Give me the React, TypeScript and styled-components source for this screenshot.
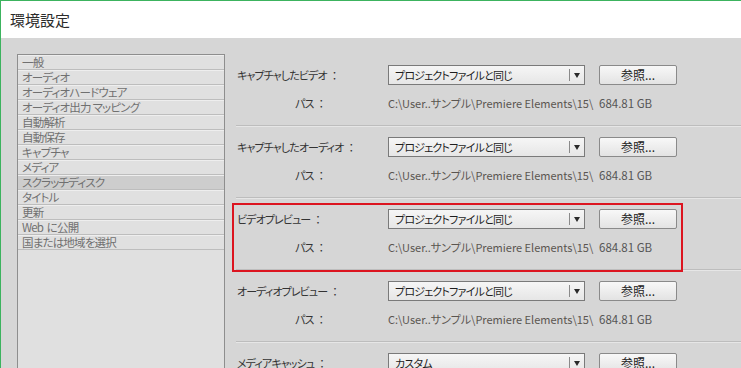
import React from 'react';
import styled, { createGlobalStyle } from 'styled-components';

const GlobalStyle = createGlobalStyle`
  html, body {
    margin: 0;
    padding: 0;
    background: #ffffff;
  }
  body {
    font-family: "Noto Sans CJK JP", "Liberation Sans", sans-serif;
    font-feature-settings: "palt";
  }
`;

const categories = [
  '一般',
  'オーディオ',
  'オーディオハードウェア',
  'オーディオ出力 マッピング',
  '自動解析',
  '自動保存',
  'キャプチャ',
  'メディア',
  'スクラッチディスク',
  'タイトル',
  '更新',
  'Web\u00a0 に公開',
  '国または地域を選択',
];

const disks = [
  { label: 'キャプチャしたビデオ', value: 'プロジェクトファイルと同じ' },
  { label: 'キャプチャしたオーディオ', value: 'プロジェクトファイルと同じ' },
  { label: 'ビデオプレビュー', value: 'プロジェクトファイルと同じ', marked: true },
  { label: 'オーディオプレビュー', value: 'プロジェクトファイルと同じ' },
  { label: 'メディアキャッシュ', value: 'カスタム' },
];

export default function App() {
  return (
    <>
      <GlobalStyle />
      <Window>
        <TitleBar>環境設定</TitleBar>
        <Body>
          <Sidebar>
            {categories.map((c) => (
              <Category key={c} $selected={c === 'スクラッチディスク'}>
                {c}
              </Category>
            ))}
          </Sidebar>
          <Content>
            {disks.map((d) => (
              <Section key={d.label}>
                <Row>
                  <Label>
                    {d.label}
                    <Colon>：</Colon>
                  </Label>
                  <Select>
                    <SelectText>{d.value}</SelectText>
                    <SelectArrow>
                      <Triangle />
                    </SelectArrow>
                  </Select>
                  <span />
                  <Button>参照...</Button>
                </Row>
                <PathRow>
                  <PathLabel>
                    パス<Colon>：</Colon>
                  </PathLabel>
                  <PathText>C:\User..サンプル\Premiere Elements\15\</PathText>
                  <span />
                  <Size>684.81 GB</Size>
                </PathRow>
                {d.marked && <Highlight />}
              </Section>
            ))}
          </Content>
        </Body>
      </Window>
    </>
  );
}

const Window = styled.div`
  display: flex;
  flex-direction: column;
  height: 100vh;
  box-sizing: border-box;
  border-top: 1px solid #3cb35e;
  border-left: 1px solid #3cb35e;
  overflow: hidden;
`;

const TitleBar = styled.div`
  height: 37px;
  flex-shrink: 0;
  display: flex;
  align-items: center;
  padding-left: 9px;
  background: #ffffff;
  color: #2b2b2b;
  font-size: 15px;
`;

const Body = styled.div`
  flex: 1;
  display: flex;
  gap: 8px;
  padding: 16px 0 0 16px;
  background: #d6d6d6;
  min-height: 0;
`;

const Sidebar = styled.div`
  width: 206px;
  flex-shrink: 0;
  background: #e0e0e0;
  border: 1px solid #8e8e8e;
  border-bottom: none;
`;

const Category = styled.div<{ $selected?: boolean }>`
  height: 13px;
  line-height: 13px;
  padding-left: 4px;
  font-size: 11.5px;
  letter-spacing: -0.8px;
  color: #707070;
  white-space: nowrap;
  background: ${(p) => (p.$selected ? '#cdcdcd' : '#e0e0e0')};
  border-top: 1px solid #eeeeee;
  border-bottom: 1px solid #bdbdbd;
`;

const Content = styled.div`
  flex: 1;
  padding-left: 3px;
`;

const Section = styled.div`
  position: relative;
  padding: 11px 0 14px 1px;
  border-bottom: 1px solid #bdbdbd;
  box-shadow: 0 1px 0 #e6e6e6;
`;

const Row = styled.div`
  display: grid;
  grid-template-columns: 151px 197px 14px 78px;
  height: 20px;
  align-items: center;
`;

const PathRow = styled(Row)`
  height: 16px;
  margin-top: 10px;
`;

const Label = styled.div`
  font-size: 11px;
  letter-spacing: -0.9px;
  color: #333333;
  white-space: nowrap;
`;

const Colon = styled.span`
  margin-left: 5px;
  letter-spacing: 0;
`;

const PathLabel = styled(Label)`
  padding-left: 58px;
`;

const Select = styled.div`
  display: flex;
  height: 20px;
  box-sizing: border-box;
  border: 1px solid #7a7a7a;
  background: linear-gradient(#f6f6f6, #e6e6e6);
`;

const SelectText = styled.div`
  flex: 1;
  padding-left: 6px;
  font-size: 11px;
  letter-spacing: -0.8px;
  line-height: 18px;
  color: #1e1e1e;
  white-space: nowrap;
`;

const SelectArrow = styled.div`
  width: 15px;
  display: flex;
  align-items: center;
  justify-content: center;
  position: relative;
  &::before {
    content: '';
    position: absolute;
    left: 0;
    top: 3px;
    bottom: 3px;
    border-left: 1px solid #8a8a8a;
  }
`;

const Triangle = styled.div`
  width: 0;
  height: 0;
  margin-left: 1px;
  border-left: 3.5px solid transparent;
  border-right: 3.5px solid transparent;
  border-top: 5px solid #2a2a2a;
`;

const Button = styled.div`
  height: 20px;
  box-sizing: border-box;
  border: 1px solid #8a8a8a;
  border-radius: 2px;
  background: linear-gradient(#f8f8f8, #e3e3e3);
  font-size: 12px;
  line-height: 18px;
  text-align: center;
  color: #222222;
`;

const PathText = styled.div`
  font-size: 11px;
  color: #5a5550;
  white-space: nowrap;
`;

const Size = styled.div`
  font-size: 11.5px;
  color: #555555;
  white-space: nowrap;
`;

const Highlight = styled.div`
  position: absolute;
  top: 5px;
  left: -4px;
  width: 451px;
  height: 69px;
  box-sizing: border-box;
  border: 2px solid #dc1520;
  pointer-events: none;
`;
